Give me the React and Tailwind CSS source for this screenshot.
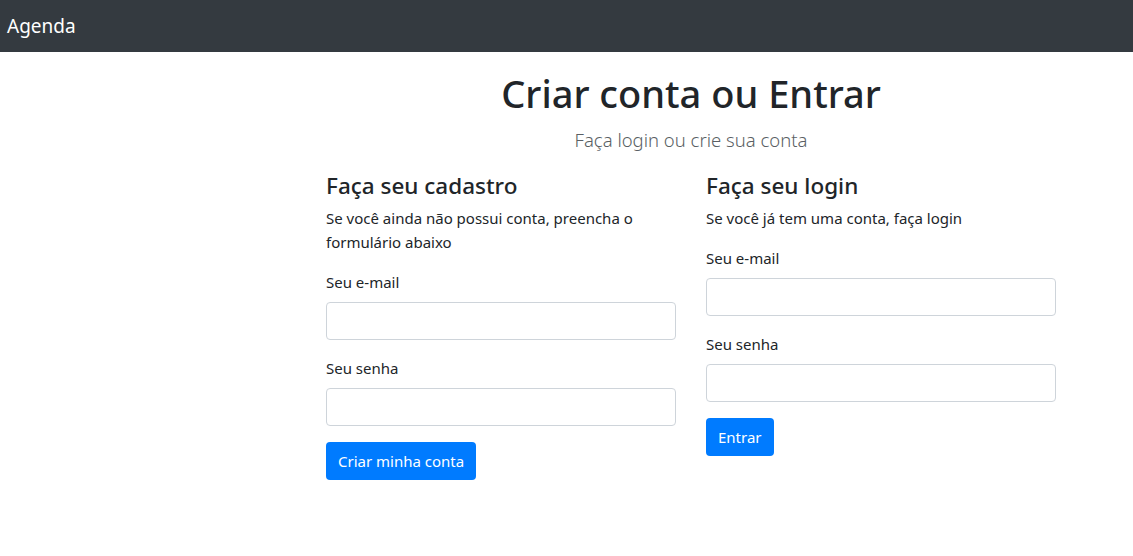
import React from 'react';

function Field({ label }) {
  return (
    <div className="mb-4">
      <label className="block mb-2 text-[15px] leading-6">{label}</label>
      <input
        type="text"
        className="block w-full h-[38px] rounded border border-[#ced4da] bg-white px-3"
      />
    </div>
  );
}

export default function App() {
  return (
    <div className="min-h-[556px] bg-white text-[#212529] font-['Noto_Sans',sans-serif]">
      <nav className="h-[52px] bg-[#343a40] flex items-center pl-[7px]">
        <span className="text-white text-[19px] leading-[30px]">Agenda</span>
      </nav>

      <div className="pl-[311px]">
        <div className="w-[760px]">
          <div className="text-center pt-[17px]">
            <h1 className="text-[38px] leading-[48px] font-medium mb-2">Criar conta ou Entrar</h1>
            <p className="text-[18.5px] leading-[30px] font-light text-[#5a5f64] mb-4">
              Faça login ou crie sua conta
            </p>
          </div>

          <div className="grid grid-cols-2">
            <div className="px-[15px]">
              <h4 className="text-[22.5px] leading-[29px] font-medium mb-[6px]">Faça seu cadastro</h4>
              <p className="text-[15px] leading-6 mb-4">
                Se você ainda não possui conta, preencha o formulário abaixo
              </p>
              <Field label="Seu e-mail" />
              <Field label="Seu senha" />
              <button className="h-[38px] px-3 rounded bg-[#007bff] text-white text-[15px]">
                Criar minha conta
              </button>
            </div>

            <div className="px-[15px]">
              <h4 className="text-[22.5px] leading-[29px] font-medium mb-[6px]">Faça seu login</h4>
              <p className="text-[15px] leading-6 mb-4">Se você já tem uma conta, faça login</p>
              <Field label="Seu e-mail" />
              <Field label="Seu senha" />
              <button className="h-[38px] px-3 rounded bg-[#007bff] text-white text-[15px]">
                Entrar
              </button>
            </div>
          </div>
        </div>
      </div>
    </div>
  );
}
